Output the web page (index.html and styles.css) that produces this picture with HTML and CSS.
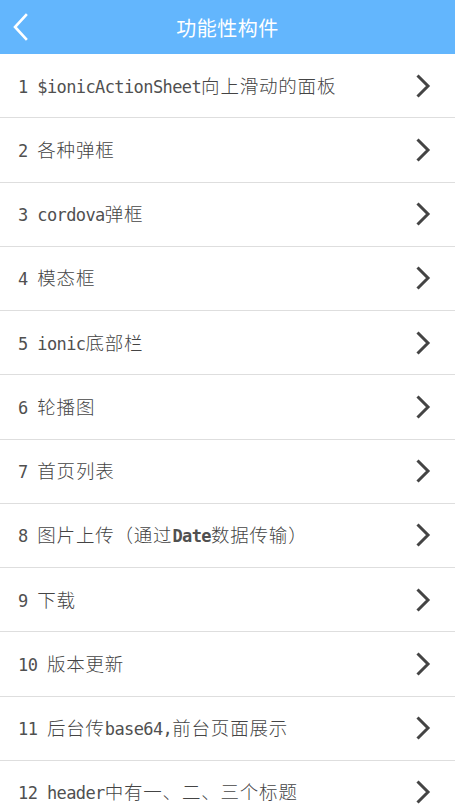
FILE: index.html
```html
<!DOCTYPE html>
<html lang="zh">
<head>
<meta charset="utf-8">
<title>功能性构件</title>
<link rel="stylesheet" href="styles.css">
</head>
<body>
<header class="bar">
  <svg class="back" width="16" height="28" viewBox="0 0 16 28"><path d="M14 2 L3 14 L14 26" fill="none" stroke="#fff" stroke-width="2.6" stroke-linecap="square"/></svg>
  <h1 class="title">功能性构件</h1>
</header>
<ul class="list">
  <li class="item"><span class="label">1 $ionicActionSheet<span class="zh">向上滑动的面板</span></span><svg class="chev" width="16" height="26" viewBox="0 0 16 26"><path d="M2.5 2.5 L13 13 L2.5 23.5" fill="none" stroke="#444" stroke-width="3"/></svg></li>
  <li class="item"><span class="label">2 <span class="zh">各种弹框</span></span><svg class="chev" width="16" height="26" viewBox="0 0 16 26"><path d="M2.5 2.5 L13 13 L2.5 23.5" fill="none" stroke="#444" stroke-width="3"/></svg></li>
  <li class="item"><span class="label">3 cordova<span class="zh">弹框</span></span><svg class="chev" width="16" height="26" viewBox="0 0 16 26"><path d="M2.5 2.5 L13 13 L2.5 23.5" fill="none" stroke="#444" stroke-width="3"/></svg></li>
  <li class="item"><span class="label">4 <span class="zh">模态框</span></span><svg class="chev" width="16" height="26" viewBox="0 0 16 26"><path d="M2.5 2.5 L13 13 L2.5 23.5" fill="none" stroke="#444" stroke-width="3"/></svg></li>
  <li class="item"><span class="label">5 ionic<span class="zh">底部栏</span></span><svg class="chev" width="16" height="26" viewBox="0 0 16 26"><path d="M2.5 2.5 L13 13 L2.5 23.5" fill="none" stroke="#444" stroke-width="3"/></svg></li>
  <li class="item"><span class="label">6 <span class="zh">轮播图</span></span><svg class="chev" width="16" height="26" viewBox="0 0 16 26"><path d="M2.5 2.5 L13 13 L2.5 23.5" fill="none" stroke="#444" stroke-width="3"/></svg></li>
  <li class="item"><span class="label">7 <span class="zh">首页列表</span></span><svg class="chev" width="16" height="26" viewBox="0 0 16 26"><path d="M2.5 2.5 L13 13 L2.5 23.5" fill="none" stroke="#444" stroke-width="3"/></svg></li>
  <li class="item"><span class="label">8 <span class="zh">图片上传（通过</span><b class="bold">Date</b><span class="zh">数据传输）</span></span><svg class="chev" width="16" height="26" viewBox="0 0 16 26"><path d="M2.5 2.5 L13 13 L2.5 23.5" fill="none" stroke="#444" stroke-width="3"/></svg></li>
  <li class="item"><span class="label">9 <span class="zh">下载</span></span><svg class="chev" width="16" height="26" viewBox="0 0 16 26"><path d="M2.5 2.5 L13 13 L2.5 23.5" fill="none" stroke="#444" stroke-width="3"/></svg></li>
  <li class="item"><span class="label">10 <span class="zh">版本更新</span></span><svg class="chev" width="16" height="26" viewBox="0 0 16 26"><path d="M2.5 2.5 L13 13 L2.5 23.5" fill="none" stroke="#444" stroke-width="3"/></svg></li>
  <li class="item"><span class="label">11 <span class="zh">后台传</span>base64,<span class="zh">前台页面展示</span></span><svg class="chev" width="16" height="26" viewBox="0 0 16 26"><path d="M2.5 2.5 L13 13 L2.5 23.5" fill="none" stroke="#444" stroke-width="3"/></svg></li>
  <li class="item"><span class="label">12 header<span class="zh">中有一、二、三个标题</span></span><svg class="chev" width="16" height="26" viewBox="0 0 16 26"><path d="M2.5 2.5 L13 13 L2.5 23.5" fill="none" stroke="#444" stroke-width="3"/></svg></li>
</ul>
</body>
</html>
```
FILE: styles.css
```css
html, body {
  margin: 0;
  padding: 0;
  background: #fff;
}
body {
  width: 455px;
  height: 809px;
  overflow: hidden;
  font-family: "DejaVu Sans Mono", "Liberation Mono", "Noto Sans CJK SC", monospace;
}
.bar {
  position: relative;
  height: 54px;
  background: #63b6fd;
  display: flex;
  align-items: center;
  justify-content: center;
}
.back {
  position: absolute;
  left: 12px;
  top: 13px;
}
.title {
  margin: 0;
  color: #fff;
  font-family: "Noto Sans CJK SC", sans-serif;
  font-size: 20px;
  font-weight: normal;
  letter-spacing: 0.5px;
}
.list {
  list-style: none;
  margin: 0;
  padding: 0;
}
.item {
  box-sizing: border-box;
  height: 64.25px;
  border-bottom: 1.5px solid #dedede;
  display: flex;
  align-items: center;
  justify-content: space-between;
  padding: 0 24px 0 18px;
  color: #505050;
}
.label {
  font-size: 17px;
  letter-spacing: -0.6px;
  white-space: pre;
  line-height: 24px;
}
.zh {
  font-family: "Noto Sans CJK SC", sans-serif;
  font-size: 18.5px;
  letter-spacing: 0.8px;
  font-weight: 300;
  color: #444;
}
.bold {
  font-weight: bold;
}
.chev {
  display: block;
}
```
